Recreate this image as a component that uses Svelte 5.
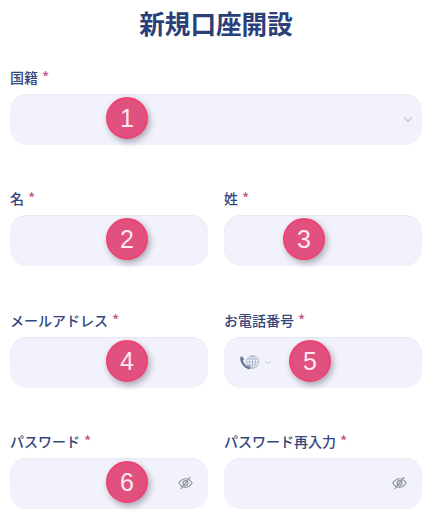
<script>
    const rows = [
        [{ label: '国籍', badge: 1, badgeX: 96, icon: 'chevron' }],
        [
            { label: '名', badge: 2, badgeX: 96 },
            { label: '姓', badge: 3, badgeX: 59 }
        ],
        [
            { label: 'メールアドレス', badge: 4, badgeX: 96 },
            { label: 'お電話番号', badge: 5, badgeX: 65, icon: 'phone' }
        ],
        [
            { label: 'パスワード', badge: 6, badgeX: 96, icon: 'eye' },
            { label: 'パスワード再入力', icon: 'eye' }
        ]
    ];
</script>

<div class="page">
    <h1>新規口座開設</h1>

    {#each rows as row}
        <div class="row">
            {#each row as field}
                <div class="field">
                    <div class="label">{field.label}<span class="req">*</span></div>
                    <div class="input">
                        {#if field.icon === 'phone'}
                            <div class="phone">
                                <svg width="22" height="16" viewBox="0 0 22 16" fill="none">
                                    <path d="M1.2 2.6 3 1.2l2.2 3-1.2 1.2c.5 2.4 2.2 4.6 4.400 5.600l1.300-1 2.800 2.600-1.600 1.700C6.200 14.500.6 8 1.200 2.600z" fill="#6a7597"/>
                                    <g stroke="#a9aec6" stroke-width=".8">
                                        <circle cx="13.500" cy="7" r="6.300"/>
                                        <ellipse cx="13.500" cy="7" rx="3" ry="6.300"/>
                                        <path d="M13.500.7v12.600M7.200 7h12.600M8 4h11M8 10h11"/>
                                    </g>
                                </svg>
                                <svg class="small-chev" width="8" height="5" viewBox="0 0 8 5" fill="none">
                                    <path d="M1 1l3 3 3-3" stroke="#c6c9d8" stroke-width="1"/>
                                </svg>
                            </div>
                        {/if}
                        {#if field.icon === 'chevron'}
                            <svg class="end chev" width="10" height="7" viewBox="0 0 10 7" fill="none">
                                <path d="M1 1l4 4.500L9 1" stroke="#c3c6d2" stroke-width="1.200"/>
                            </svg>
                        {/if}
                        {#if field.icon === 'eye'}
                            <svg class="end eye" width="15" height="14" viewBox="0 0 14 13" fill="none">
                                <path d="M.8 6.500C2.500 3.800 4.600 2.500 7 2.500s4.500 1.300 6.200 4C11.500 9.200 9.400 10.500 7 10.500S2.500 9.200.8 6.500z" stroke="#8f929e" stroke-width="1.100"/>
                                <circle cx="7" cy="6.500" r="2.200" stroke="#8f929e" stroke-width="1.100"/>
                                <path d="M2.500 12 11.500 1" stroke="#8f929e" stroke-width="1.100"/>
                            </svg>
                        {/if}
                        {#if field.badge}
                            <div class="badge" style="left: {field.badgeX}px">{field.badge}</div>
                        {/if}
                    </div>
                </div>
            {/each}
        </div>
    {/each}
</div>

<style>
    :global(body) {
        background: #fff;
    }

    .page {
        height: 527px;
        overflow: hidden;
        padding: 0 6px 0 10px;
        box-sizing: border-box;
        font-family: "Noto Sans CJK JP", "Noto Sans", sans-serif;
    }

    h1 {
        margin: 0 0 22px;
        height: 46px;
        line-height: 46px;
        font-size: 25.6px;
        font-weight: 700;
        text-align: center;
        color: #2b3f78;
    }

    .row {
        display: flex;
        gap: 16px;
        margin-bottom: 44.33px;
    }

    .field {
        flex: 1;
        min-width: 0;
    }

    .label {
        height: 17px;
        line-height: 17px;
        margin-bottom: 9px;
        font-size: 14px;
        font-weight: 500;
        color: #34467c;
    }

    .req {
        margin-left: 4px;
        font-size: 15px;
        color: #c9548f;
    }

    .input {
        position: relative;
        display: flex;
        align-items: center;
        height: 51px;
        padding: 0 15px;
        border-radius: 17px;
        background: #f1f2fb;
        box-shadow: inset 0 1px 1px #e9e9f3;
    }

    .end {
        margin-left: auto;
    }

    .chev {
        margin-right: -6px;
    }

    .phone {
        display: flex;
        align-items: center;
        gap: 3px;
        margin-top: 1px;
    }

    .badge {
        position: absolute;
        top: 3px;
        width: 38px;
        height: 38px;
        border: 2px solid #ef4273;
        border-radius: 50%;
        background: #e0517f;
        box-shadow: 2px 3px 6px rgba(60, 50, 70, 0.4);
        color: #fde8ee;
        font-family: "Liberation Sans", sans-serif;
        font-size: 25px;
        line-height: 38px;
        text-align: center;
    }
</style>
